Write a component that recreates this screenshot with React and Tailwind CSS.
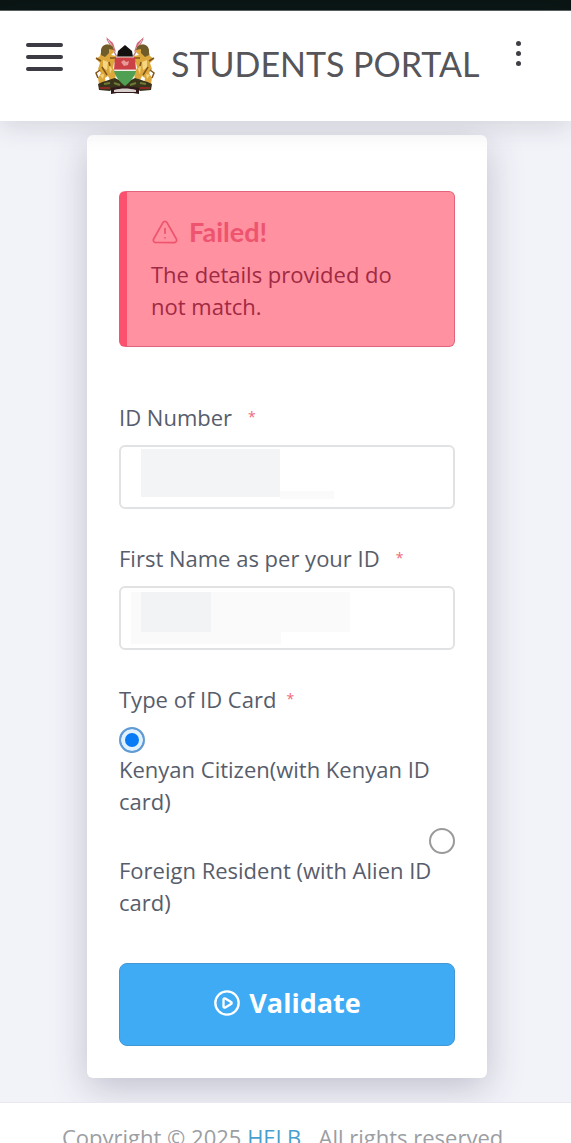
import { useState } from 'react';
import { CirclePlay, TriangleAlert } from 'lucide-react';

const idTypes = [
  { id: 'citizen', label: 'Kenyan Citizen(with Kenyan ID card)', align: 'self-start' },
  { id: 'foreign', label: 'Foreign Resident (with Alien ID card)', align: 'self-end' },
];

function Lion() {
  return (
    <g>
      <path d="M12 2 L22 20" stroke="#b9868d" strokeWidth="1.5" />
      <path d="M11 0 L18 6 L21 15 L17 12 Z" fill="#d4667c" />
      <path d="M13 3 L19 12" stroke="#f1c9cf" strokeWidth="1" />
      <path d="M7 11 C9 7 15 6 18 10 L19 15 L16 18 L21 19 L22 23 L19 26 L18 31 L21 36 L20 43 L15 43 L13 39 L10 41 L11 47 L4 47 L3 41 L6 36 L3 32 L5 26 L1 22 L5 19 Z" fill="#dca73b" />
      <path d="M6 13 C7 7 14 6 18 10 L19 13 L14 12 L14 16 L10 20 L6 18 Z" fill="#705c2a" />
      <path d="M8 23 L13 25 L12 33 L8 31 Z M14 28 L17 32 L15 37 Z M5 38 L9 37 L8 42 Z" fill="#f6d681" />
      <path d="M1 21 L6 24 M5 33 L1 36 L3 41 M7 30 L12 38 M15 21 L21 21 M14 25 L15 29" stroke="#80551c" strokeWidth="1.5" fill="none" />
    </g>
  );
}

function Crest() {
  return (
    <svg viewBox="0 0 60 58" className="h-[58px] w-[60px] shrink-0" role="img" aria-label="Kenya coat of arms">
      <Lion />
      <g transform="translate(60 0) scale(-1 1)">
        <Lion />
      </g>
      <path d="M3 47 C9 44 14 43 20 41 L30 46 L40 41 C46 43 51 44 57 47 L56 53 L45 54 L42 51 L18 51 L15 54 L4 53 Z" fill="#39331c" />
      <path d="M5 51 L15 51 M45 51 L55 51" stroke="#8b2927" strokeWidth="2" />
      <path d="M9 47 L15 46 M19 46 L25 48 M35 48 L41 46 M45 46 L51 47" stroke="#6e7b34" strokeWidth="2" />
      <path d="M30 8 L37 14 L38 20 H22 L23 14 Z" fill="#12110f" />
      <path d="M20 20 H40 L41 33 H19 Z" fill="#cb4145" />
      <path d="M19 34 H41 C39 41 35 45 30 49 C25 45 21 41 19 34 Z" fill="#4fa052" />
      <path d="M21 20 H39 M19 33 H41" stroke="#eadfd8" strokeWidth="1" />
      <path d="M26 25 L29 23 L31 25 L34 24 L33 28 L29 29 Z" fill="#e79a98" />
      <path d="M16 51 C24 49 36 49 44 51 L44 57 L38 56 H22 L16 57 Z" fill="#30191a" />
      <path d="M19 53 C26 51 34 51 41 53 L41 55 H19 Z" fill="#d8cfcc" />
    </svg>
  );
}

function Required() {
  return <span className="text-sm text-[#f0697a]">*</span>;
}

function Field({ id, label, children }) {
  return (
    <div className="flex flex-col gap-3">
      <label htmlFor={id} className="flex items-center gap-4">
        {label} <Required />
      </label>
      <div className="relative">
        <input
          id={id}
          type="text"
          className="block h-16 w-full rounded-md border-2 border-[#e1e2e4] bg-white px-6 outline-none"
        />
        {children}
      </div>
    </div>
  );
}

export default function App() {
  const [idType, setIdType] = useState('citizen');

  return (
    <div className="min-h-screen bg-[#f2f3f9] font-['Open_Sans',sans-serif] text-[22px] leading-8 text-[#575d6b]">
      {/* Status bar */}
      <div className="h-[11px] border-b border-[#5c6161] bg-[#0a1514]" />

      {/* Header */}
      <header className="relative z-10 flex h-[110px] items-start bg-white px-[26px] pt-[26px] shadow-[0_6px_24px_rgba(40,45,60,0.14)]">
        <button type="button" aria-label="Open menu" className="mt-1.5 flex w-[37px] shrink-0 flex-col gap-2">
          <span className="h-[4px] rounded-full bg-[#3c3a42]" />
          <span className="h-[4px] rounded-full bg-[#3c3a42]" />
          <span className="h-[4px] rounded-full bg-[#3c3a42]" />
        </button>
        <div className="ml-8 flex items-start gap-4">
          <Crest />
          <h1 className="whitespace-nowrap font-['Lato',sans-serif] text-[34px] leading-[54px] text-[#55555a]">
            STUDENTS PORTAL
          </h1>
        </div>
        <button type="button" aria-label="More options" className="ml-auto mr-6 mt-1 flex shrink-0 flex-col gap-[5px]">
          <span className="size-[5px] rounded-full bg-[#3f3e45]" />
          <span className="size-[5px] rounded-full bg-[#3f3e45]" />
          <span className="size-[5px] rounded-full bg-[#3f3e45]" />
        </button>
      </header>

      {/* Validation form */}
      <main className="pb-6 pl-[87px] pr-[84px] pt-3.5">
        <form
          onSubmit={(e) => e.preventDefault()}
          className="rounded-md bg-white px-8 pb-8 pt-14 shadow-[0_10px_36px_rgba(50,45,80,0.26)]"
        >
          <div
            role="alert"
            className="rounded-md border border-l-8 border-[#e0657c] border-l-[#fb506e] bg-[#ff91a1] px-6 py-6 text-[#9f2a43]"
          >
            <h2 className="mb-2.5 flex items-center gap-2.5 font-['Lato',sans-serif] text-[27px] font-bold text-[#ee546e]">
              <TriangleAlert size={28} strokeWidth={1.5} />
              Failed!
            </h2>
            <p>The details provided do not match.</p>
          </div>

          <div className="mt-[54px] flex flex-col gap-[33px]">
            <Field id="id-number" label="ID Number">
              <div className="pointer-events-none absolute left-[22px] top-1 h-12 w-[139px] bg-[#f2f4f6]" />
              <div className="pointer-events-none absolute left-[161px] top-[46px] h-2 w-[54px] bg-[#fafafa]" />
            </Field>
            <Field id="first-name" label="First Name as per your ID">
              <div className="pointer-events-none absolute left-3 top-1.5 h-[52px] w-[150px] bg-[#fafafb]" />
              <div className="pointer-events-none absolute left-[22px] top-1.5 h-10 w-[70px] bg-[#f2f3f5]" />
              <div className="pointer-events-none absolute left-[92px] top-1.5 h-10 w-[139px] bg-[#fafafb]" />
            </Field>

            <fieldset>
              <legend className="mb-3 flex items-center gap-2.5">
                Type of ID Card <Required />
              </legend>
              <div className="flex flex-col gap-[11px]">
                {idTypes.map((type) => (
                  <div key={type.id} className="flex flex-col">
                    <input
                      id={type.id}
                      type="radio"
                      name="id-type"
                      checked={idType === type.id}
                      onChange={() => setIdType(type.id)}
                      className={`size-[26px] appearance-none rounded-full border-2 border-[#999a9c] bg-white checked:border-[#639bd0] checked:bg-[#087bf5] checked:shadow-[inset_0_0_0_4px_#e2f2fc] ${type.align}`}
                    />
                    <label htmlFor={type.id}>{type.label}</label>
                  </div>
                ))}
              </div>
            </fieldset>
          </div>

          <button
            type="submit"
            className="mt-[45px] flex h-[83px] w-full items-center justify-center gap-2 rounded-lg border border-[#4397d5] bg-[#40abf5] pb-1 text-[27px] font-bold text-white"
          >
            <CirclePlay size={28} strokeWidth={2} />
            Validate
          </button>
        </form>
      </main>

      {/* Footer */}
      <footer className="relative border-t border-[#e8e8ee] bg-white pb-5 pt-[18px] text-center text-[#9b9ea3]">
        Copyright © 2025 <a href="#helb" className="text-[#489fcf]">HELB</a> . All rights reserved.
      </footer>
    </div>
  );
}
